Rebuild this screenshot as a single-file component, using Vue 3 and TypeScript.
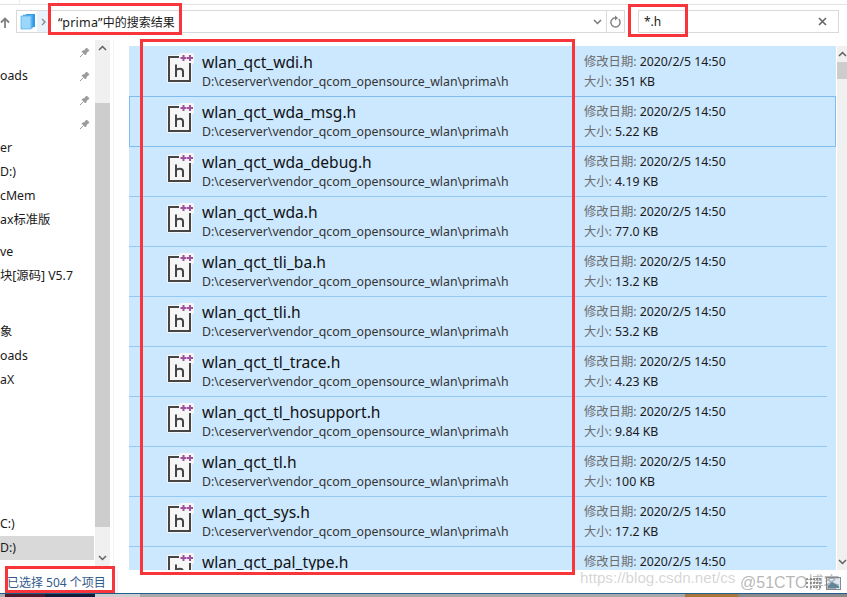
<template>
  <div class="win">
    <div class="topline"></div>
    <div class="bar">
      <svg class="up" width="10" height="11" viewBox="0 0 10 11"><path d="M5 11V2M1 5.500L5 1.500l4 4" fill="none" stroke="#808080" stroke-width="1.800" /></svg>
      <div class="address">
        <svg class="folder" width="16" height="17" viewBox="0 0 16 17">
          <rect x="6" y="1" width="9" height="13" fill="#2f9be8" />
          <rect x="3.500" y="2" width="9" height="13" fill="#6cbdf2" stroke="#3d9fe6" stroke-width=".6" />
          <rect x="1" y="3" width="10" height="13" fill="#9bd7fa" stroke="#3d9fe6" stroke-width=".6" />
        </svg>
        <div class="crumb"><svg width="5" height="8" viewBox="0 0 5 8"><path d="M1 1l3 3-3 3" fill="none" stroke="#888" stroke-width="1.400" /></svg></div>
        <span class="addr-text"><span class="quoted">“prima”</span>中的搜索结果</span>
        <svg class="drop" width="9" height="6" viewBox="0 0 9 6"><path d="M1 1l3.500 3.500L8 1" fill="none" stroke="#777" stroke-width="1.500" /></svg>
        <div class="refresh">
          <svg width="12" height="14" viewBox="0 0 12 14"><path d="M8.600 4a4.600 4.600 0 1 1-3-1.200" fill="none" stroke="#808080" stroke-width="1.400" /><path d="M5 .5l3 2.500-3 2.500z" fill="#808080" /></svg>
        </div>
      </div>
      <div class="search">
        <span>*.h</span>
        <svg width="9" height="9" viewBox="0 0 9 9"><path d="M1 1l7 7M8 1L1 8" stroke="#666" stroke-width="1.600" /></svg>
      </div>
    </div>

    <div class="main">
      <aside class="nav">
        <div class="nav-list">
          <div v-for="(item, i) in navItems" :key="i" class="nav-item" :class="[item.cls, { selected: item.selected }]">
            <span>{{ item.text }}</span>
            <svg v-if="item.pin" class="pin" width="12" height="12" viewBox="0 0 12 12"><path d="M1 11l3.500-3.500M3 5.500l3.500 3.500 1-2.500 2.500-2-2.500-2.500-2 2.500z" fill="#9a9a9a" stroke="#9a9a9a" /></svg>
          </div>
        </div>
        <div class="nav-scroll">
          <svg class="arrow" width="9" height="6" viewBox="0 0 9 6"><path d="M1 5l3.500-3.500L8 5" fill="none" stroke="#606060" stroke-width="1.500" /></svg>
          <div class="nav-track"><div class="nav-thumb"></div></div>
          <svg class="arrow" width="9" height="6" viewBox="0 0 9 6"><path d="M1 1l3.500 3.500L8 1" fill="none" stroke="#606060" stroke-width="1.500" /></svg>
        </div>
      </aside>

      <div class="gutter"></div>

      <section class="results">
        <div class="list">
          <div v-for="(f, i) in files" :key="f.name" class="row" :class="{ focus: i === 1 }">
            <svg class="ficon" width="28" height="32" viewBox="0 0 28 32">
              <rect x="0" y="3" width="25" height="28" rx="2" fill="#f6f6f6" />
              <rect x="12" y="1" width="15" height="11" rx="2" fill="#f6f6f6" />
              <path d="M12 5H2v24h21V11" fill="none" stroke="#454545" stroke-width="2" />
              <path d="M9 12.500V25M9 18.500c1-2 7-3 7 1V25" fill="none" stroke="#454545" stroke-width="2" />
              <path d="M13.500 6h6M16.500 3v6M20 6h6M23 3v6" stroke="#a0509c" stroke-width="2" />
            </svg>
            <div class="names">
              <div class="fname">{{ f.name }}</div>
              <div class="fpath">D:\ceserver\vendor_qcom_opensource_wlan\prima\h</div>
            </div>
            <div class="meta">
              <div class="mline"><span class="key">修改日期:</span> 2020/2/5 14:50</div>
              <div class="mline"><span class="key">大小:</span> {{ f.size }}</div>
            </div>
          </div>
        </div>
        <div class="list-scroll">
          <svg class="arrow" width="9" height="6" viewBox="0 0 9 6"><path d="M1 5l3.500-3.500L8 5" fill="none" stroke="#606060" stroke-width="1.500" /></svg>
          <div class="list-thumb"></div>
          <div class="spacer"></div>
          <svg class="arrow" width="9" height="6" viewBox="0 0 9 6"><path d="M1 1l3.500 3.500L8 1" fill="none" stroke="#606060" stroke-width="1.500" /></svg>
        </div>
      </section>
    </div>

    <footer class="status">
      <span class="count">已选择 504 个项目</span>
      <div class="status-line"></div>
      <div class="views">
        <svg width="16" height="12" viewBox="0 0 16 12"><path d="M0 2h2M4 2h11M0 6h2M4 6h11M0 10h2M4 10h11" stroke="#777" stroke-width="1.400" stroke-dasharray="2 1" /></svg>
        <svg width="15" height="13" viewBox="0 0 15 13"><rect x=".5" y=".5" width="14" height="12" fill="#dce9f5" stroke="#8a8a8a" /><path d="M2 9l4-4 3 2 4 2v2H2z" fill="#5a8aa0" /></svg>
      </div>
    </footer>
    <div class="taskbar">
      <i class="s1"></i><i class="s2"></i><i class="s3"></i><i class="s4"></i><i class="s5"></i><i class="s6"></i><i class="s7"></i>
    </div>

    <div class="mark box-addr"></div>
    <div class="mark box-search"></div>
    <div class="mark box-list"></div>
    <div class="mark box-status"></div>
    <span class="wm wm1">https://blog.csdn.net/cs</span>
    <span class="wm wm2">@51CTO博客</span>
  </div>
</template>

<script setup lang="ts">
interface NavItem {
  text: string
  pin?: boolean
  selected?: boolean
  cls?: string
}

const navItems: NavItem[] = [
  { text: '', pin: true },
  { text: 'oads', pin: true },
  { text: '', pin: true },
  { text: '', pin: true },
  { text: 'er' },
  { text: 'D:)' },
  { text: 'cMem' },
  { text: 'ax标准版' },
  { text: 've', cls: 'gap8' },
  { text: '块[源码] V5.7' },
  { text: '象', cls: 'gap32' },
  { text: 'oads' },
  { text: 'aX' },
  { text: 'C:)', cls: 'gap120' },
  { text: 'D:)', selected: true },
]

const files = [
  { name: 'wlan_qct_wdi.h', size: '351 KB' },
  { name: 'wlan_qct_wda_msg.h', size: '5.22 KB' },
  { name: 'wlan_qct_wda_debug.h', size: '4.19 KB' },
  { name: 'wlan_qct_wda.h', size: '77.0 KB' },
  { name: 'wlan_qct_tli_ba.h', size: '13.2 KB' },
  { name: 'wlan_qct_tli.h', size: '53.2 KB' },
  { name: 'wlan_qct_tl_trace.h', size: '4.23 KB' },
  { name: 'wlan_qct_tl_hosupport.h', size: '9.84 KB' },
  { name: 'wlan_qct_tl.h', size: '100 KB' },
  { name: 'wlan_qct_sys.h', size: '17.2 KB' },
  { name: 'wlan_qct_pal_type.h', size: '1.05 KB' },
]
</script>

<style>
html, body {
  margin: 0;
  background: #fff;
}
</style>

<style scoped>
.win {
  position: relative;
  width: 847px;
  height: 597px;
  overflow: hidden;
  display: flex;
  flex-direction: column;
  background: #fff;
  color: #1a1a1a;
  font-family: "Noto Sans", "Noto Sans CJK SC", sans-serif;
  font-size: 12px;
}
.topline {
  height: 5px;
  flex: none;
  border-bottom: 1px solid #e3e3e3;
  box-sizing: border-box;
  background:
    linear-gradient(#ededed, #ededed) 19px 0 / 1px 100% no-repeat,
    linear-gradient(#ededed, #ededed) 58px 0 / 1px 100% no-repeat;
}
.bar {
  height: 35px;
  flex: none;
  display: flex;
  align-items: flex-start;
  padding-top: 5px;
  box-sizing: border-box;
}
.up {
  margin: 7px 6px 0 0;
  flex: none;
}
.address {
  width: 609px;
  height: 23px;
  box-sizing: border-box;
  border: 1px solid #d9d9d9;
  display: flex;
  align-items: center;
  flex: none;
}
.folder {
  margin-left: 3px;
  flex: none;
}
.crumb {
  width: 13px;
  height: 21px;
  margin-left: 1px;
  background: #eaf3fb;
  display: flex;
  align-items: center;
  justify-content: center;
}
.addr-text {
  margin-left: 8px;
  font-size: 12px;
  flex: 1;
}
.quoted {
  font-size: 12.500px;
  letter-spacing: 0.2px;
}
.drop {
  margin-right: 4px;
}
.refresh {
  width: 17px;
  height: 21px;
  border-left: 1px solid #d9d9d9;
  display: flex;
  align-items: center;
  justify-content: center;
}
.search {
  width: 201px;
  height: 23px;
  margin-left: 13px;
  box-sizing: border-box;
  border: 1px solid #d9d9d9;
  display: flex;
  align-items: center;
  justify-content: space-between;
  padding: 0 11px 0 5px;
  font-size: 12px;
}
.main {
  flex: 1;
  min-height: 0;
  display: flex;
}
.nav {
  width: 110px;
  flex: none;
  display: flex;
}
.nav-list {
  width: 95px;
}
.nav-item {
  height: 24px;
  line-height: 24px;
  width: 94px;
  box-sizing: border-box;
  display: flex;
  align-items: center;
  justify-content: space-between;
  white-space: nowrap;
  overflow: hidden;
  padding-right: 2px;
  font-size: 12.300px;
}
.gap8 {
  margin-top: 8px;
}
.gap32 {
  margin-top: 32px;
}
.gap120 {
  margin-top: 120px;
}
.selected {
  background: #d9d9d9;
}
.pin {
  margin-right: 1px;
}
.nav-scroll {
  width: 15px;
  height: 526px;
  background: #f0f0f0;
  display: flex;
  flex-direction: column;
  align-items: center;
}
.arrow {
  flex: none;
  margin: 5px 0;
}
.nav-track {
  flex: 1;
  width: 15px;
  padding-top: 47px;
  box-sizing: border-box;
}
.nav-thumb {
  height: 424px;
  background: #cdcdcd;
}
.gutter {
  width: 19px;
  flex: none;
  box-sizing: border-box;
  border-left: 3px solid #fff;
  background: linear-gradient(#f2f2f2, #f2f2f2) 0 0 / 1px 100% no-repeat;
}
.results {
  flex: 1;
  display: flex;
  min-width: 0;
}
.list {
  width: 707px;
  flex: none;
  margin-top: 6px;
  padding-top: 1px;
  box-sizing: border-box;
  overflow: hidden;
  background: #cce8ff;
}
.row {
  height: 50px;
  box-sizing: border-box;
  display: grid;
  grid-template-columns: 38px 35px 382px 1fr;
  align-items: start;
  background: linear-gradient(#93c8f2, #93c8f2) 0 100% / calc(100% - 9px) 1px no-repeat;
}
.ficon {
  grid-column: 1 / 3;
  margin: 5px 0 0 38px;
}
.names {
  grid-column: 3;
}
.meta {
  grid-column: 4;
  padding-top: 5px;
}
.focus {
  background: none;
  border: 1px solid #7fbdf0;
  margin-top: -1px;
  height: 51px;
  grid-template-columns: 37px 35px 382px 1fr;
}
.focus .ficon {
  margin-left: 37px;
}
.fname {
  margin-top: 4px;
  height: 22px;
  line-height: 22px;
  font-size: 15.600px;
  color: #111;
  white-space: nowrap;
}
.fpath {
  height: 18px;
  margin-top: 0;
  line-height: 18px;
  font-size: 12.300px;
  color: #333;
  white-space: nowrap;
}
.mline {
  height: 20px;
  line-height: 20px;
  font-size: 12.300px;
  white-space: nowrap;
}
.key {
  color: #6d6d6d;
}
.list-scroll {
  width: 11px;
  margin-left: 1px;
  flex: none;
  margin-top: 6px;
  background: #f0f0f0;
  display: flex;
  flex-direction: column;
  align-items: center;
}
.list-thumb {
  width: 100%;
  height: 17px;
  background: #cdcdcd;
}
.spacer {
  flex: 1;
}
.status {
  height: 23px;
  flex: none;
  display: flex;
  align-items: center;
}
.count {
  margin-left: 7px;
  width: 110px;
  flex: none;
  color: #31598a;
  font-size: 12px;
  white-space: nowrap;
}
.status-line {
  width: 1px;
  height: 100%;
  background: #f0f0f0;
}
.views {
  margin-left: auto;
  display: flex;
  align-items: center;
  gap: 4px;
  padding: 3px 6px 0 0;
}
.taskbar {
  height: 4px;
  flex: none;
  display: flex;
  border-top: 1px solid #1f5f8c;
  box-sizing: border-box;
  background: #a9a9a9;
}
.taskbar i {
  display: block;
  height: 100%;
}
.s1 { width: 5px; background: #b0b0b0; }
.s2 { width: 40px; background: #4d1a2c; }
.s3 { width: 50px; background: #141c3a; }
.s4 { width: 45px; background: #cfcfcf; }
.s5 { width: 545px; background: #a9a9a9; }
.s6 { width: 53px; background: #a8753f; }
.s7 { flex: 1; background: #8a8a8a; }
.mark {
  position: absolute;
  box-sizing: border-box;
  border: 3px solid #f8353a;
  pointer-events: none;
}
.box-addr {
  left: 48px;
  top: 3px;
  width: 134px;
  height: 32px;
}
.box-search {
  left: 628px;
  top: 4px;
  width: 60px;
  height: 33px;
}
.box-list {
  left: 140px;
  top: 39px;
  width: 435px;
  height: 536px;
}
.box-status {
  left: 5px;
  top: 566px;
  width: 110px;
  height: 27px;
}
.wm {
  position: absolute;
  white-space: nowrap;
  font-family: "Liberation Sans", "Noto Sans CJK SC", sans-serif;
  pointer-events: none;
}
.wm1 {
  left: 580px;
  top: 569px;
  font-size: 15.200px;
  color: rgba(150, 150, 150, 0.4);
}
.wm2 {
  left: 740px;
  top: 569px;
  font-size: 16px;
  color: rgba(120, 120, 120, 0.55);
}
</style>
